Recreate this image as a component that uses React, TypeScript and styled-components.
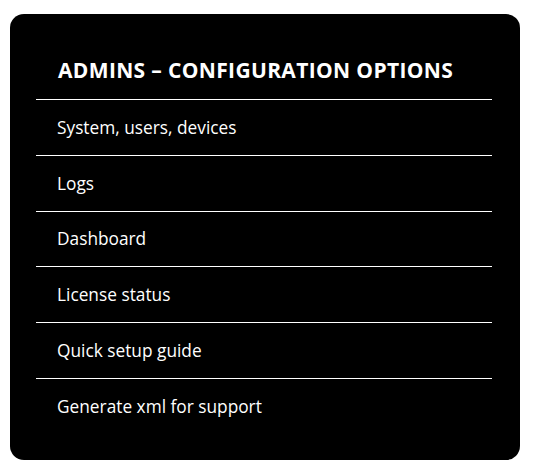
import React from 'react';
import styled, { createGlobalStyle } from 'styled-components';

const GlobalStyle = createGlobalStyle`
  body {
    margin: 0;
    background: #fff;
    font-family: 'Open Sans', 'Noto Sans', sans-serif;
  }
`;

const PageWrapper = styled.div`
  padding: 14px 0 0 10px;
`;

const CardStyled = styled.div`
  width: 510px;
  height: 446px;
  box-sizing: border-box;
  background: #000;
  border-radius: 14px;
  padding: 26px 28px 0 26px;
  color: #fff;
`;

const TitleStyled = styled.div`
  padding: 18px 0 16px 22px;
  font-size: 21px;
  line-height: 25px;
  font-weight: 700;
  letter-spacing: 0.35px;
  border-bottom: 1px solid #fff;
`;

const ItemStyled = styled.div<{ $last?: boolean }>`
  height: 55.8px;
  box-sizing: border-box;
  display: flex;
  align-items: center;
  padding-left: 21px;
  font-size: 17.3px;
  font-weight: 400;
  border-bottom: ${(p) => (p.$last ? 'none' : '1px solid #fff')};
  cursor: pointer;
`;

function App() {
  const items = [
    'System, users, devices',
    'Logs',
    'Dashboard',
    'License status',
    'Quick setup guide',
    'Generate xml for support',
  ];
  return (
    <PageWrapper>
      <GlobalStyle />
      <CardStyled>
        <TitleStyled>ADMINS – CONFIGURATION OPTIONS</TitleStyled>
        {items.map((item, key) => (
          <ItemStyled key={key} $last={key === items.length - 1}>
            {item}
          </ItemStyled>
        ))}
      </CardStyled>
    </PageWrapper>
  );
}

export default App;
